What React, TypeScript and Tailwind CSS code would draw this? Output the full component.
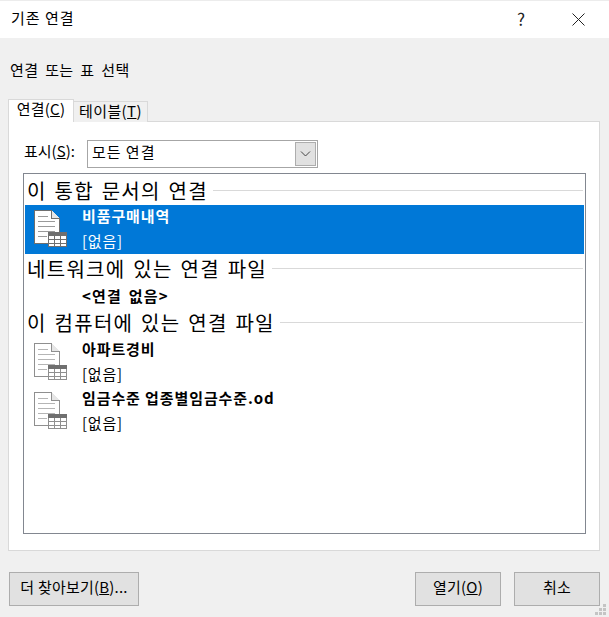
import { JSX } from 'react'

const font = 'font-["Noto_Sans_CJK_KR","Noto_Sans",sans-serif]'

function ConnectionIcon({ selected = false }: { selected?: boolean }): JSX.Element {
  const stroke = selected ? '#6f6f6f' : '#8f8f8f'
  const lines = selected ? '#9a9a9a' : '#b5b5b5'
  return (
    <svg width="34" height="38" viewBox="0 0 34 38" className="shrink-0" shapeRendering="crispEdges">
      <path d="M0.5 0.5H17.5L25.5 8.500V33.5H0.5Z" fill="#fff" stroke={stroke} />
      <path d="M17.5 0.5V8.5H25.5" fill="#e6e6e6" stroke={stroke} />
      <path d="M4 6.5H14M4 11.5H21M4 16.5H21M4 21.5H21M4 26.5H13" stroke={lines} />
      <rect x="14" y="22" width="19" height="15" fill="#fff" />
      <rect x="14" y="22" width="19" height="4" fill="#6f6f6f" />
      <path
        d="M14.5 26V36.5H32.5V26M14.5 29.5H32.500M14.5 33H32.5M20.5 26V36.5M26.5 26V36.5"
        fill="none"
        stroke={stroke}
      />
    </svg>
  )
}

function SectionHeader({ label }: { label: string }): JSX.Element {
  return (
    <div className="flex items-center h-[25px] pl-[2px]">
      <span className="text-[20px] leading-[25px] mt-[-1px] text-black tracking-[1.3px] [word-spacing:2px] whitespace-nowrap">
        {label}
      </span>
      <div className="flex-1 h-px bg-[#d9d9d9] ml-[5px] mr-px" />
    </div>
  )
}

function ConnectionItem({
  name,
  selected = false
}: {
  name: string
  selected?: boolean
}): JSX.Element {
  return (
    <div className={`flex h-[49px] pl-[9px] pt-[5px] ${selected ? 'bg-[#0078d7] text-white' : 'text-black'}`}>
      <ConnectionIcon selected={selected} />
      <div className="ml-[14px] flex flex-col">
        <span className="text-[15px] leading-[20px] tracking-[0.9px] font-bold mt-[-4px] whitespace-nowrap">{name}</span>
        <span className="text-[15px] leading-[20px] tracking-[0.8px] mt-[5px]">[없음]</span>
      </div>
    </div>
  )
}

function DialogButton({ label, hotkey, suffix = '', className }: {
  label: string
  hotkey?: string
  suffix?: string
  className: string
}): JSX.Element {
  return (
    <button
      type="button"
      className={`h-[34px] pb-[3px] bg-[#e1e1e1] border border-[#adadad] text-[15px] tracking-[0.2px] text-black whitespace-nowrap ${className}`}
    >
      {label}
      {hotkey && (
        <>
          (<span className="underline">{hotkey}</span>)
        </>
      )}
      {suffix}
    </button>
  )
}

export default function App(): JSX.Element {
  return (
    <div className={`relative w-[609px] h-[617px] overflow-hidden bg-[#f0f0f0] flex flex-col ${font}`}>
      <div className="h-[38px] bg-white border-t border-[#ececec] flex items-center pl-[11px] shrink-0">
        <span className="text-[15px] text-black tracking-[1px] mt-[-2px]">기존 연결</span>
        <span className="ml-auto text-[17px] text-[#222] mr-[47px] mt-[-2px]">?</span>
        <svg width="13" height="13" viewBox="0 0 13 13" className="mr-[24px]">
          <path d="M0.5 0.5L12.5 12.5M12.5 0.5L0.5 12.5" stroke="#222" fill="none" />
        </svg>
      </div>

      <div className="pl-[10px] mt-[22px] h-[20px] text-[15px] leading-[20px] text-black tracking-[0.4px] [word-spacing:3px]">
        연결 또는 표 선택
      </div>

      <div className="flex items-end pl-[8px] mt-[19px] h-[23px] relative z-10">
        <div className="h-[23px] w-[66px] bg-white border border-[#d9d9d9] border-b-0 text-[15px] leading-[18px] tracking-[0.2px] text-center text-black">
          연결(<span className="underline">C</span>)
        </div>
        <div className="h-[21px] w-[75px] ml-[-1px] bg-[#f0f0f0] border border-[#d9d9d9] border-b-0 text-[15px] leading-[18px] tracking-[0.4px] text-center text-black">
          테이블(<span className="underline">T</span>)
        </div>
      </div>

      <div className="mx-[8px] mt-[-1px] w-[592px] h-[430px] bg-white border border-[#d9d9d9] px-[14px] pt-[18px]">
        <div className="flex items-center h-[28px] ml-[1px]">
          <span className="text-[15px] text-black mb-[5px]">
            표시(<span className="underline">S</span>):
          </span>
          <div className="ml-[12px] w-[231px] h-[28px] border border-[#a6a6a6] flex items-center pl-[4px] pr-px">
            <span className="text-[15px] text-black tracking-[1px] mb-[3px]">모든 연결</span>
            <div className="ml-auto w-[21px] h-[24px] bg-[#e1e1e1] border border-[#adadad] flex items-center justify-center">
              <svg width="11" height="6" viewBox="0 0 11 6">
                <path d="M1 0.5L5.5 5L10 0.5" stroke="#444" fill="none" />
              </svg>
            </div>
          </div>
        </div>

        <div className="mt-[5px] w-[563px] h-[361px] border border-[#828790] bg-white pt-[4px] pl-px pr-px">
          <SectionHeader label="이 통합 문서의 연결" />
          <div className="mt-[2px]">
            <ConnectionItem name="비품구매내역" selected />
          </div>
          <div className="mt-[2px]">
            <SectionHeader label="네트워크에 있는 연결 파일" />
          </div>
          <div className="h-[29px] pl-[57px] text-[15px] leading-[29px] tracking-[1.2px] [word-spacing:2px] font-bold text-black">
            &lt;연결 없음&gt;
          </div>
          <SectionHeader label="이 컴퓨터에 있는 연결 파일" />
          <div className="mt-[3px]">
            <ConnectionItem name="아파트경비" />
            <ConnectionItem name="임금수준 업종별임금수준.od" />
          </div>
        </div>
      </div>

      <div className="flex mt-[21px] pl-[9px] pr-[9px]">
        <DialogButton label="더 찾아보기" hotkey="B" suffix="..." className="w-[130px]" />
        <DialogButton label="열기" hotkey="O" className="w-[86px] ml-auto" />
        <DialogButton label="취소" className="w-[86px] ml-[13px]" />
      </div>

      <svg width="11" height="11" viewBox="0 0 11 11" className="absolute right-[3px] bottom-[2px]" shapeRendering="crispEdges">
        <path d="M8 0h3v3H8zM4 4h3v3H4zM8 4h3v3H8zM0 8h3v3H0zM4 8h3v3H4zM8 8h3v3H8z" fill="#c4c4c4" />
      </svg>
    </div>
  )
}
